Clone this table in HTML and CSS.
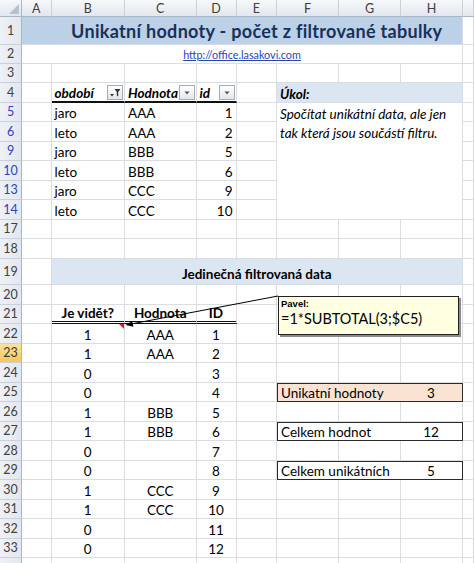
FILE: index.html
```html
<!DOCTYPE html>
<html lang="cs">
<head>
<meta charset="utf-8">
<title>Unikatní hodnoty - počet z filtrované tabulky</title>
<link rel="stylesheet" href="styles.css">
</head>
<body>
<div class="sheet">
  <!-- column headers -->
  <div class="ch corner"><span class="tri"></span></div>
  <div class="ch">A</div>
  <div class="ch">B</div>
  <div class="ch">C</div>
  <div class="ch">D</div>
  <div class="ch">E</div>
  <div class="ch">F</div>
  <div class="ch">G</div>
  <div class="ch">H</div>
  <div class="ch"></div>

  <!-- row 1 -->
  <div class="rh">1</div>
  <div class="c titlebg"></div>
  <div class="c title span7">Unikatní hodnoty - počet z filtrované tabulky</div>
  <div class="c"></div>

  <!-- row 2 -->
  <div class="rh">2</div>
  <div class="c linkcell span8"><a class="link" href="#">http://office.lasakovi.com</a></div>
  <div class="c"></div>

  <!-- row 3 -->
  <div class="rh">3</div>
  <div class="c"></div><div class="c"></div><div class="c"></div><div class="c"></div>
  <div class="c"></div><div class="c"></div><div class="c"></div><div class="c"></div><div class="c"></div>

  <!-- row 4 -->
  <div class="rh">4</div>
  <div class="c"></div>
  <div class="c th">období<span class="fbtn"><svg width="14" height="13" viewBox="0 0 14 13"><path d="M2 8h4l-2 2.5z" fill="#333"/><path d="M6.5 3h6l-2.3 3v4.5l-1.4-1V6z" fill="#333"/></svg></span></div>
  <div class="c th">Hodnota<span class="fbtn"><svg width="14" height="13" viewBox="0 0 14 13"><path d="M4.5 5.5h5l-2.5 3z" fill="#555"/></svg></span></div>
  <div class="c th">id<span class="fbtn"><svg width="14" height="13" viewBox="0 0 14 13"><path d="M4.5 5.5h5l-2.5 3z" fill="#555"/></svg></span></div>
  <div class="c"></div>
  <div class="c taskhead span3">Úkol:</div>
  <div class="c"></div>

  <!-- row 5 -->
  <div class="rh f">5</div>
  <div class="c"></div>
  <div class="c">jaro</div>
  <div class="c">AAA</div>
  <div class="c num">1</div>
  <div class="c"></div>
  <div class="c task span3">Spočítat unikátní data, ale jen tak která jsou součástí filtru.</div>
  <div class="c"></div>

  <!-- row 6 -->
  <div class="rh f">6</div>
  <div class="c"></div><div class="c">leto</div><div class="c">AAA</div><div class="c num">2</div><div class="c"></div><div class="c"></div>

  <!-- row 9 -->
  <div class="rh f">9</div>
  <div class="c"></div><div class="c">jaro</div><div class="c">BBB</div><div class="c num">5</div><div class="c"></div><div class="c"></div>

  <!-- row 10 -->
  <div class="rh f">10</div>
  <div class="c"></div><div class="c">leto</div><div class="c">BBB</div><div class="c num">6</div><div class="c"></div><div class="c"></div>

  <!-- row 13 -->
  <div class="rh f">13</div>
  <div class="c"></div><div class="c">jaro</div><div class="c">CCC</div><div class="c num">9</div><div class="c"></div><div class="c"></div>

  <!-- row 14 -->
  <div class="rh f">14</div>
  <div class="c"></div><div class="c">leto</div><div class="c">CCC</div><div class="c num">10</div><div class="c"></div><div class="c"></div>

  <!-- row 17 -->
  <div class="rh">17</div>
  <div class="c"></div><div class="c"></div><div class="c"></div><div class="c"></div>
  <div class="c"></div><div class="c"></div><div class="c"></div><div class="c"></div><div class="c"></div>

  <!-- row 18 -->
  <div class="rh">18</div>
  <div class="c"></div><div class="c"></div><div class="c"></div><div class="c"></div>
  <div class="c"></div><div class="c"></div><div class="c"></div><div class="c"></div><div class="c"></div>

  <!-- row 19 -->
  <div class="rh">19</div>
  <div class="c"></div>
  <div class="c subtitle span7">Jedinečná filtrovaná data</div>
  <div class="c"></div>

  <!-- row 20 -->
  <div class="rh">20</div>
  <div class="c"></div><div class="c"></div><div class="c"></div><div class="c"></div>
  <div class="c"></div><div class="c"></div><div class="c"></div><div class="c"></div><div class="c"></div>

  <!-- row 21 -->
  <div class="rh">21</div>
  <div class="c"></div>
  <div class="c hd">Je vidět?</div>
  <div class="c hd">Hodnota</div>
  <div class="c hd">ID</div>
  <div class="c"></div><div class="c"></div><div class="c"></div><div class="c"></div><div class="c"></div>

  <!-- row 22 -->
  <div class="rh">22</div>
  <div class="c"></div><div class="c ctr note">1</div><div class="c ctr">AAA</div><div class="c ctr">1</div>
  <div class="c"></div><div class="c"></div><div class="c"></div><div class="c"></div><div class="c"></div>

  <!-- row 23 -->
  <div class="rh active">23</div>
  <div class="c"></div><div class="c ctr">1</div><div class="c ctr">AAA</div><div class="c ctr">2</div>
  <div class="c"></div><div class="c"></div><div class="c"></div><div class="c"></div><div class="c"></div>

  <!-- row 24 -->
  <div class="rh">24</div>
  <div class="c"></div><div class="c ctr">0</div><div class="c ctr"></div><div class="c ctr">3</div>
  <div class="c"></div><div class="c"></div><div class="c"></div><div class="c"></div><div class="c"></div>

  <!-- row 25 -->
  <div class="rh">25</div>
  <div class="c"></div><div class="c ctr">0</div><div class="c ctr"></div><div class="c ctr">4</div>
  <div class="c"></div>
  <div class="box peach span3"><span class="lbl">Unikatní hodnoty</span><span class="val">3</span></div>
  <div class="c"></div>

  <!-- row 26 -->
  <div class="rh">26</div>
  <div class="c"></div><div class="c ctr">1</div><div class="c ctr">BBB</div><div class="c ctr">5</div>
  <div class="c"></div><div class="c"></div><div class="c"></div><div class="c"></div><div class="c"></div>

  <!-- row 27 -->
  <div class="rh">27</div>
  <div class="c"></div><div class="c ctr">1</div><div class="c ctr">BBB</div><div class="c ctr">6</div>
  <div class="c"></div>
  <div class="box span3"><span class="lbl">Celkem hodnot</span><span class="val">12</span></div>
  <div class="c"></div>

  <!-- row 28 -->
  <div class="rh">28</div>
  <div class="c"></div><div class="c ctr">0</div><div class="c ctr"></div><div class="c ctr">7</div>
  <div class="c"></div><div class="c"></div><div class="c"></div><div class="c"></div><div class="c"></div>

  <!-- row 29 -->
  <div class="rh">29</div>
  <div class="c"></div><div class="c ctr">0</div><div class="c ctr"></div><div class="c ctr">8</div>
  <div class="c"></div>
  <div class="box span3"><span class="lbl">Celkem unikátních</span><span class="val">5</span></div>
  <div class="c"></div>

  <!-- row 30 -->
  <div class="rh">30</div>
  <div class="c"></div><div class="c ctr">1</div><div class="c ctr">CCC</div><div class="c ctr">9</div>
  <div class="c"></div><div class="c"></div><div class="c"></div><div class="c"></div><div class="c"></div>

  <!-- row 31 -->
  <div class="rh">31</div>
  <div class="c"></div><div class="c ctr">1</div><div class="c ctr">CCC</div><div class="c ctr">10</div>
  <div class="c"></div><div class="c"></div><div class="c"></div><div class="c"></div><div class="c"></div>

  <!-- row 32 -->
  <div class="rh">32</div>
  <div class="c"></div><div class="c ctr">0</div><div class="c ctr"></div><div class="c ctr">11</div>
  <div class="c"></div><div class="c"></div><div class="c"></div><div class="c"></div><div class="c"></div>

  <!-- row 33 -->
  <div class="rh">33</div>
  <div class="c"></div><div class="c ctr">0</div><div class="c ctr"></div><div class="c ctr">12</div>
  <div class="c"></div><div class="c"></div><div class="c"></div><div class="c"></div><div class="c"></div>

  <!-- row 34 (only its top edge is in view) -->
  <div class="rh"></div>
  <div class="c"></div><div class="c"></div><div class="c"></div><div class="c"></div>
  <div class="c"></div><div class="c"></div><div class="c"></div><div class="c"></div><div class="c"></div>

  <!-- comment overlay -->
  <svg class="arrow" width="474" height="563" viewBox="0 0 474 563">
    <line x1="278" y1="296" x2="131" y2="324" stroke="#000" stroke-width="1"/>
    <path d="M125.5 325 L133.4 326.8 L132.2 320.9 Z" fill="#000"/>
  </svg>
  <div class="comment">
    <div class="author">Pavel:</div>
    <div class="formula">=1*SUBTOTAL(3;$C5)</div>
  </div>
</div>
</body>
</html>
```

FILE: styles.css
```css
* {
  box-sizing: border-box;
}

html,
body {
  margin: 0;
  padding: 0;
  background: #ffffff;
}

body {
  width: 474px;
  height: 563px;
  overflow: hidden;
  font-family: Lato, "Open Sans", sans-serif;
  color: #000;
}

.sheet {
  position: relative;
  display: grid;
  grid-template-columns: 22px 29.5px 73.5px 71.5px 40px 40.5px 62px 62px 62px 11px;
  grid-template-rows: 17px 28px 18.5px 19.5px repeat(9, 19.5px) 26.5px repeat(15, 19.5px);
  font-size: 13.5px;
}

/* headers */
.ch {
  background: linear-gradient(#f6f8fa, #e2e7ee);
  border-right: 1px solid #c9d0da;
  border-bottom: 1px solid #a9b6c6;
  display: flex;
  align-items: center;
  justify-content: center;
  font-size: 12.5px;
  color: #404040;
}

.corner {
  position: relative;
  border-right-color: #a9b6c6;
}

.tri {
  position: absolute;
  right: 2px;
  bottom: 2px;
  width: 0;
  height: 0;
  border-left: 10px solid transparent;
  border-bottom: 10px solid #b7c0cb;
}

.rh {
  background: linear-gradient(90deg, #eef1f5, #e3e8ee);
  border-right: 1px solid #a9b6c6;
  border-bottom: 1px solid #c9d0da;
  display: flex;
  align-items: center;
  justify-content: center;
  font-size: 12.5px;
  color: #404040;
}

.rh.f {
  color: #2e3fc4;
}

.rh.active {
  background: linear-gradient(#fbe29d, #f5c75a);
  color: #3a3a3a;
}

/* cells */
.c {
  border-right: 1px solid #dadde2;
  border-bottom: 1px solid #dadde2;
  display: flex;
  align-items: flex-end;
  padding: 0 3px;
  line-height: 16px;
  white-space: nowrap;
  min-width: 0;
}

.span8 {
  grid-column: span 8;
}

.span7 {
  grid-column: span 7;
}

.span3 {
  grid-column: span 3;
}

.num {
  justify-content: flex-end;
}

.ctr {
  justify-content: center;
}

.titlebg {
  background: #bcd0e8;
  border-right-color: #bcd0e8;
}

.title {
  background: #bcd0e8;
  justify-content: center;
  font-weight: 700;
  font-size: 18px;
  line-height: 20px;
  letter-spacing: 0.3px;
  color: #16325a;
  padding-bottom: 3px;
}

.linkcell {
  justify-content: center;
  line-height: 13px;
  padding-bottom: 2px;
}

.link {
  font-size: 10.8px;
  color: #2a44b5;
  text-decoration: underline;
}

.th {
  position: relative;
  font-weight: 700;
  font-style: italic;
  border-bottom: 2px solid #111;
}

.fbtn {
  position: absolute;
  right: 1px;
  top: 2px;
  width: 16px;
  height: 15px;
  border: 1px solid #a7acb3;
  background: linear-gradient(#ffffff, #e4e7eb);
  display: flex;
  align-items: center;
  justify-content: center;
}

.taskhead {
  background: #dce6f2;
  font-weight: 700;
  font-style: italic;
  border-right-color: #dadde2;
}

.task {
  grid-row: span 6;
  align-items: flex-start;
  white-space: normal;
  font-style: italic;
  line-height: 19.5px;
  padding-top: 2px;
}

.subtitle {
  background: #dce6f2;
  justify-content: center;
  font-weight: 700;
  padding-bottom: 2px;
}

.hd {
  justify-content: center;
  font-weight: 700;
  border-bottom: 3px double #111;
}

.note {
  position: relative;
}

.note::after {
  content: "";
  position: absolute;
  right: 0;
  top: 0;
  width: 0;
  height: 0;
  border-top: 5px solid #d8202a;
  border-left: 5px solid transparent;
}

.box {
  border: 1px solid #2a2a2a;
  display: grid;
  grid-template-columns: 1fr 62px;
  align-items: end;
  line-height: 16px;
  background: #fff;
}

.box.peach {
  background: #fbe3d4;
}

.lbl {
  padding-left: 3px;
  white-space: nowrap;
}

.val {
  text-align: center;
}

/* comment */
.arrow {
  position: absolute;
  left: 0;
  top: 0;
  pointer-events: none;
}

.comment {
  position: absolute;
  left: 278px;
  top: 296px;
  width: 181px;
  height: 39px;
  background: #ffffe1;
  border: 1px solid #222;
  box-shadow: 2px 2px 0 #8c8c8c;
  padding: 1px 2px;
}

.author {
  font-family: "Liberation Sans", Arial, sans-serif;
  font-weight: 700;
  font-size: 9.5px;
  line-height: 11px;
}

.formula {
  font-size: 14.5px;
  line-height: 18px;
  margin-top: 1px;
}
```
